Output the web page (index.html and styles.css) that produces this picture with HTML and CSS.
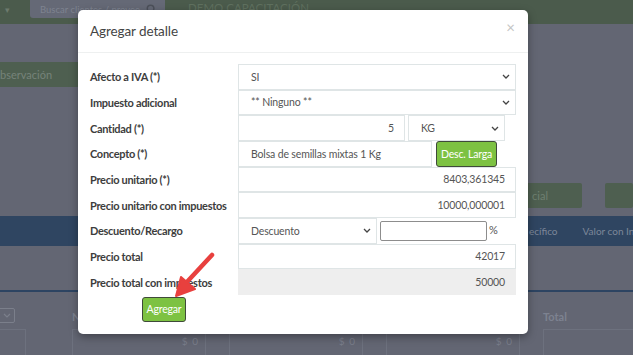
FILE: index.html
```html
<!DOCTYPE html>
<html lang="es">
<head>
<meta charset="utf-8">
<title>Agregar detalle</title>
<link rel="stylesheet" href="styles.css">
</head>
<body>
  <div class="page">
    <div class="topbar">
      <span class="caret">▾</span>
      <div class="search">
        <span>Buscar clientes / provee</span>
        <svg width="11" height="11" viewBox="0 0 12 12"><circle cx="5" cy="5" r="3.6" fill="none" stroke="#4c505a" stroke-width="1.6"/><path d="M7.6 7.6L11 11" stroke="#4c505a" stroke-width="1.8"/></svg>
      </div>
      <span class="company">DEMO CAPACITACIÓN</span>
    </div>
    <div class="obs">bservación</div>
    <div class="actions">
      <div class="btn-bg wide">cial</div>
      <div class="btn-bg"></div>
    </div>
    <div class="band">
      <span>ecífico</span>
      <span>Valor con In</span>
    </div>
    <div class="band-gap"></div>
    <div class="totals">
      <div class="col first">
        <div class="mini-select"><svg width="8" height="5" viewBox="0 0 8 5"><path d="M1 1l3 3 3-3" fill="none" stroke="#7b7f8b" stroke-width="1.2"/></svg></div>
        <div class="box"></div>
      </div>
      <div class="col">
        <div class="lbl">N</div>
        <div class="box">$ 0</div>
      </div>
      <div class="col">
        <div class="lbl"></div>
        <div class="box">$ 0</div>
      </div>
      <div class="col">
        <div class="lbl"></div>
        <div class="box">$ 0</div>
      </div>
      <div class="col last">
        <div class="lbl">Total</div>
        <div class="box"></div>
      </div>
    </div>
  </div>

  <div class="modal">
    <div class="modal-header">
      <h4>Agregar detalle</h4>
      <span class="close">×</span>
    </div>
    <div class="modal-body">
      <label>Afecto a IVA (*)</label>
      <div class="field select">SI<svg class="chev" width="8" height="5" viewBox="0 0 8 5"><path d="M1 1l3 3 3-3"/></svg></div>

      <label>Impuesto adicional</label>
      <div class="field select">** Ninguno **<svg class="chev" width="8" height="5" viewBox="0 0 8 5"><path d="M1 1l3 3 3-3"/></svg></div>

      <label>Cantidad (*)</label>
      <div class="split">
        <div class="field num qty">5</div>
        <div class="field select unit">KG<svg class="chev" width="8" height="5" viewBox="0 0 8 5"><path d="M1 1l3 3 3-3"/></svg></div>
      </div>

      <label>Concepto (*)</label>
      <div class="split">
        <div class="field concept">Bolsa de semillas mixtas 1 Kg</div>
        <button class="btn-green small">Desc. Larga</button>
      </div>

      <label>Precio unitario (*)</label>
      <div class="field num">8403,361345</div>

      <label>Precio unitario con impuestos</label>
      <div class="field num">10000,000001</div>

      <label>Descuento/Recargo</label>
      <div class="split">
        <div class="field select disc">Descuento<svg class="chev" width="8" height="5" viewBox="0 0 8 5"><path d="M1 1l3 3 3-3"/></svg></div>
        <div class="pct"></div>
        <span class="pct-sign">%</span>
      </div>

      <label>Precio total</label>
      <div class="field num">42017</div>

      <label>Precio total con impuestos</label>
      <div class="field num readonly">50000</div>
    </div>
    <div class="modal-footer">
      <button class="btn-green">Agregar</button>
    </div>
  </div>

  <svg class="arrow" width="633" height="355" viewBox="0 0 633 355">
    <path d="M212 255L186 283" stroke="#e8403e" stroke-width="4.5" stroke-linecap="round"/>
    <path d="M176 296L181 277L195 289Z" fill="#e8403e" stroke="#e8403e" stroke-width="2" stroke-linejoin="round"/>
  </svg>
</body>
</html>
```

FILE: styles.css
```css
* {
    box-sizing: border-box;
    margin: 0;
    padding: 0;
}
body {
    width: 633px;
    height: 355px;
    overflow: hidden;
    background: #636673;
    font-family: "Source Sans Pro", Lato, "Liberation Sans", sans-serif;
    position: relative;
    white-space: nowrap;
}

/* dimmed page behind the modal */
.topbar {
    height: 24px;
    background: #4b5b4c;
    display: flex;
    align-items: flex-start;
}
.topbar .caret {
    color: #6d7a6d;
    font-size: 9px;
    margin: 4px 0 0 5px;
    width: 25px;
}
.search {
    width: 135px;
    height: 18px;
    background: #656976;
    border-radius: 0 0 3px 3px;
    display: flex;
    align-items: center;
    justify-content: space-between;
    padding: 0 8px 0 10px;
    font-size: 9.5px;
    color: #7e8390;
    overflow: hidden;
}
.company {
    margin-left: 23px;
    margin-top: 1px;
    font-size: 11.5px;
    color: #5f705f;
}
.obs {
    margin-top: 38px;
    width: 80px;
    height: 25px;
    background: #4e5f50;
    color: #76837a;
    font-size: 11px;
    line-height: 25px;
}
.actions {
    margin-top: 96px;
    height: 25px;
    display: flex;
    gap: 23px;
    padding-left: 518px;
}
.btn-bg {
    width: 40px;
    background: #4e5f50;
    border-radius: 2px;
    color: #6f7f70;
    font-size: 11px;
    line-height: 25px;
}
.btn-bg.wide {
    width: 77px;
    text-align: right;
    padding-right: 34px;
}
.band {
    margin-top: 8px;
    height: 30px;
    background: #2f4561;
    display: flex;
    gap: 25px;
    padding-left: 529px;
    align-items: center;
    font-size: 10px;
    color: #7d8799;
}
.band-gap {
    height: 46px;
    border-bottom: 2px solid #2d4462;
}
.totals {
    display: flex;
    gap: 23px;
    margin-left: -80px;
    padding-top: 16px;
}
.col {
    width: 134px;
    flex-shrink: 0;
}
.col.first {
    width: 106px;
    margin-right: 23px;
}
.col.last {
    width: 100px;
}
.lbl {
    height: 21px;
    font-size: 11px;
    color: #7d8290;
    font-weight: bold;
    padding-top: 2px;
}
.mini-select {
    width: 95px;
    height: 15px;
    margin-bottom: 6px;
    border: 1px solid #7b7f8b;
    border-radius: 2px;
    display: flex;
    justify-content: flex-end;
    align-items: center;
    padding-right: 3px;
}
.box {
    height: 30px;
    border: 1px solid #6d717e;
    font-size: 10px;
    color: #7b7f8b;
    text-align: right;
    padding: 5px 6px;
    letter-spacing: 1px;
}

/* modal */
.modal {
    position: absolute;
    left: 78px;
    top: 10px;
    width: 450px;
    height: 324px;
    background: #fff;
    border-radius: 5px;
    box-shadow: 0 3px 9px rgba(0, 0, 0, 0.35);
}
.modal-header {
    height: 43px;
    border-bottom: 1px solid #eef0f0;
    display: flex;
    align-items: center;
    justify-content: space-between;
    padding: 0 12px;
}
.modal-header h4 {
    font-size: 13.5px;
    letter-spacing: -0.1px;
    font-weight: normal;
    color: #444;
}
.close {
    color: #c5c5c5;
    font-size: 15px;
    margin-top: -8px;
    margin-right: 1px;
}
.modal-body {
    display: grid;
    grid-template-columns: 148px 1fr;
    grid-auto-rows: 25.67px;
    padding: 11px 12px 0;
    align-items: stretch;
}
.modal-body label {
    font-size: 11px;
    letter-spacing: -0.3px;
    font-weight: bold;
    color: #3d3d3d;
    display: flex;
    align-items: center;
}
.field {
    border: 1px solid #dfe5e6;
    font-size: 10.5px;
    letter-spacing: -0.15px;
    color: #555;
    display: flex;
    align-items: center;
    padding: 0 10px 0 12px;
    height: 100%;
}
.field.select {
    justify-content: space-between;
    padding-right: 5px;
}
.chev {
    fill: none;
    stroke: #444;
    stroke-width: 1.3;
}
.field.num {
    justify-content: flex-end;
}
.field.readonly {
    background: #eeeeee;
    border-color: #eeeeee;
}
.split {
    display: flex;
    align-items: stretch;
    height: 100%;
}
.qty {
    width: 167px;
    flex-shrink: 0;
}
.unit {
    width: 97px;
    margin-left: 3px;
}
.concept {
    width: 194px;
    flex-shrink: 0;
}
.disc {
    width: 139px;
    flex-shrink: 0;
}
.pct {
    width: 107px;
    height: 20px;
    margin: 3px 0 0 3px;
    border: 1px solid #8d8d8d;
    border-radius: 2px;
}
.pct-sign {
    font-size: 11px;
    color: #555;
    margin: 5px 0 0 2px;
}
.btn-green {
    background: #7dc242;
    color: #fff;
    border: 1px solid #3f4a3a;
    border-radius: 3px;
    font-family: inherit;
    font-size: 10.5px;
    letter-spacing: -0.2px;
}
.btn-green.small {
    width: 61px;
    margin-left: 4px;
}
.modal-footer {
    padding: 2px 0 0 64px;
}
.modal-footer .btn-green {
    width: 44px;
    height: 25px;
}
.arrow {
    position: absolute;
    left: 0;
    top: 0;
}
```
